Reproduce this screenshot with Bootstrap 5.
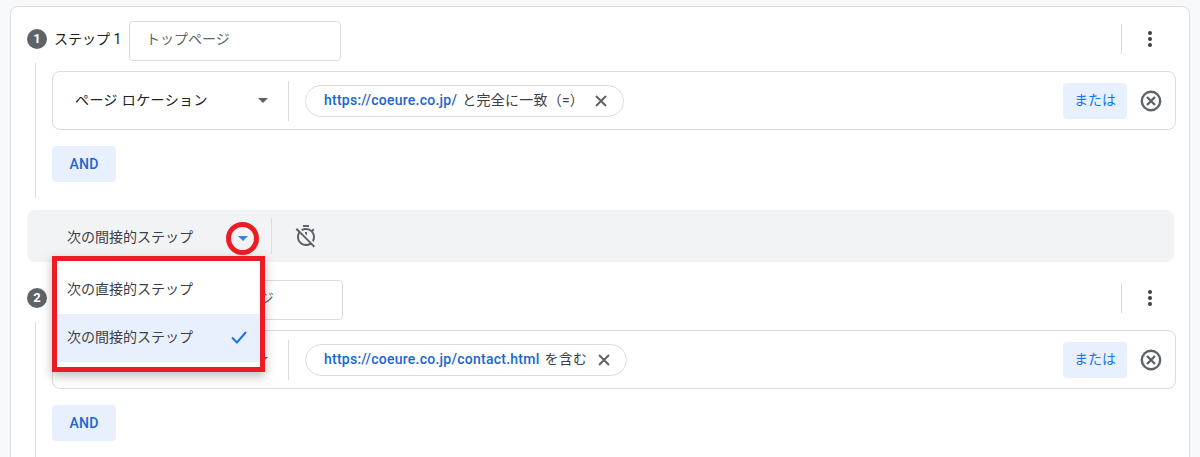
<!DOCTYPE html>
<html lang="ja">
<head>
<meta charset="UTF-8">
<meta name="viewport" content="width=device-width, initial-scale=1.0">
<link rel="stylesheet" href="https://cdn.jsdelivr.net/npm/bootstrap@5.3.0/dist/css/bootstrap.min.css">
<title>ステップ</title>
<style>
html, body { height: 457px; overflow: hidden; }
body { background: #f8f9fa; color: #3c4043; font-family: Roboto, "Noto Sans CJK JP", sans-serif; font-size: 14px; padding: 6px 10px 0; }
.step-card { background: #fff; border: 1px solid #dadce0; border-radius: 8px; padding: 14px 13px 0 16px; height: 600px; }
.step-head { height: 40px; }
.step-num { width: 20px; height: 20px; border-radius: 50%; background: #5f6368; color: #fff; font-size: 13px; font-weight: 700; margin: 0 7px 4px 0; }
.step-label { width: 75px; color: #202124; margin-bottom: 4px; }
.step-name { width: 212px; height: 40px; border: 1px solid #dadce0; border-radius: 4px; padding: 0 0 3px 16px; color: #5f6368; }
.step-name-second { width: 212px; margin-left: 2px; }
.head-rule { width: 1px; height: 30px; background: #dadce0; margin: 0 18px 4px 0; }
.kebab { margin: 0 16px 5px 0; }
.step-body { margin: 2px 0 0 8px; border-left: 1px solid #dadce0; padding: 8px 0 16px 16px; }
.rule-box { height: 59px; border: 1px solid #dadce0; border-radius: 8px; }
.field-select { width: 235px; padding: 0 20px 0 22px; color: #202124; letter-spacing: .4px; }
.box-rule { width: 1px; height: 40px; background: #dadce0; margin-right: 16px; }
.rule-chip { height: 32px; border: 1px solid #dadce0; border-radius: 16px; padding: 0 15px 0 18px; white-space: nowrap; letter-spacing: .25px; }
.rule-chip b { color: #1967d2; font-weight: 500; margin-right: 5px; }
.chip-x { margin-left: 10px; }
.or-btn { width: 64px; height: 36px; background: #e8f0fe; color: #1a73e8; border: 0; border-radius: 4px; padding: 0; font-size: 14px; }
.remove-x { margin: 0 12px 0 12px; }
.and-btn { width: 64px; height: 36px; background: #e8f0fe; color: #1967d2; border: 0; border-radius: 4px; padding: 0; font-size: 14px; font-weight: 500; letter-spacing: .25px; margin-top: 16px; display: block; }
.next-bar { height: 52px; margin: 12px 2px 18px 0; background: #f1f3f4; border-radius: 8px; }
.next-select { width: 244px; padding: 0 0 0 40px; }
.next-select > span:first-child { padding-top: 2px; }
.caret-ring { width: 33px; height: 33px; border: 5px solid #ed1c24; border-radius: 50%; margin: 4px 12px 0 0; }
.bar-rule { width: 1px; height: 36px; background: #dadce0; margin-right: 22px; }
.next-menu { position: absolute; left: 25px; top: 46px; width: 213px; height: 116px; background: #fff; border: 5px solid #ed1c24; box-shadow: 0 4px 10px rgba(60, 64, 67, .35); z-index: 5; }
.next-item { height: 48px; padding: 0 12px 2px 10px; }
.next-item-top { height: 53px; padding: 3px 0 0 10px; }
.next-item-on { background: #e8f0fe; }
</style>
</head>
<body>
<div class="step-card">
    <div class="step-head d-flex align-items-center">
        <span class="step-num d-flex align-items-center justify-content-center">1</span>
        <span class="step-label">ステップ 1</span>
        <div class="step-name d-flex align-items-center">トップページ</div>
        <span class="head-rule ms-auto"></span>
        <svg class="kebab" width="20" height="20" viewBox="0 0 20 20" fill="#3c4043"><circle cx="10" cy="4" r="2"/><circle cx="10" cy="10" r="2"/><circle cx="10" cy="16" r="2"/></svg>
    </div>
    <div class="step-body">
        <div class="rule-box d-flex align-items-center">
            <div class="field-select d-flex align-items-center justify-content-between">
                <span>ページ ロケーション</span>
                <svg width="10" height="5" viewBox="0 0 10 5" fill="#5f6368"><path d="M0 0h10L5 5z"/></svg>
            </div>
            <span class="box-rule"></span>
            <div class="rule-chip d-flex align-items-center"><b>https://coeure.co.jp/</b>と完全に一致（=）
                <svg class="chip-x" width="14" height="14" viewBox="0 0 14 14" stroke="#5f6368" stroke-width="2" fill="none"><path d="M2 2l10 10M12 2L2 12"/></svg>
            </div>
            <button type="button" class="or-btn ms-auto">または</button>
            <svg class="remove-x" width="24" height="24" viewBox="0 0 24 24" fill="none" stroke="#5f6368" stroke-width="2.4"><circle cx="12" cy="12" r="9.2"/><path d="M8 8l8 8M16 8l-8 8"/></svg>
        </div>
        <button type="button" class="and-btn">AND</button>
    </div>

    <div class="next-bar position-relative d-flex align-items-center">
        <div class="next-select d-flex align-items-center justify-content-between">
            <span>次の間接的ステップ</span>
            <span class="caret-ring d-flex align-items-center justify-content-center">
                <svg width="10" height="5" viewBox="0 0 10 5" fill="#3b82e8"><path d="M0 0h10L5 5z"/></svg>
            </span>
        </div>
        <span class="bar-rule"></span>
        <svg width="24" height="24" viewBox="0 0 24 24" fill="#5f6368"><path d="M19.04 4.55l-1.42 1.42C16.07 4.74 14.12 4 12 4c-1.83 0-3.53.55-4.95 1.48l1.46 1.46C9.53 6.35 10.73 6 12 6c3.87 0 7 3.13 7 7 0 1.27-.35 2.47-.94 3.49l1.45 1.45C20.45 16.53 21 14.83 21 13c0-2.12-.74-4.07-1.97-5.61l1.42-1.42-1.41-1.42zM15 1H9v2h6V1zm-4 8.44l2 2V8h-2v1.44zM3.02 4L1.61 5.41l2.75 2.75C3.51 9.52 3 11.2 3 13c0 4.97 4.03 9 9 9 1.8 0 3.48-.51 4.84-1.37l2.75 2.75 1.41-1.41L3.02 4zM12 20c-3.87 0-7-3.13-7-7 0-1.24.33-2.4.89-3.4l9.51 9.51c-1 .56-2.16.89-3.4.89z"/></svg>
        <div class="next-menu">
            <div class="next-item next-item-top d-flex align-items-center">次の直接的ステップ</div>
            <div class="next-item next-item-on d-flex align-items-center justify-content-between">
                <span>次の間接的ステップ</span>
                <svg width="18" height="14" viewBox="0 0 18 14" fill="none" stroke="#1a73e8" stroke-width="2"><path d="M2 7.5l5 5L16 2"/></svg>
            </div>
        </div>
    </div>

    <div class="step-head d-flex align-items-center">
        <span class="step-num d-flex align-items-center justify-content-center">2</span>
        <span class="step-label">ステップ 2</span>
        <div class="step-name step-name-second d-flex align-items-center">お問い合わせページ</div>
        <span class="head-rule ms-auto"></span>
        <svg class="kebab" width="20" height="20" viewBox="0 0 20 20" fill="#3c4043"><circle cx="10" cy="4" r="2"/><circle cx="10" cy="10" r="2"/><circle cx="10" cy="16" r="2"/></svg>
    </div>
    <div class="step-body">
        <div class="rule-box d-flex align-items-center">
            <div class="field-select d-flex align-items-center justify-content-between">
                <span>ページ ロケーション</span>
                <svg width="10" height="5" viewBox="0 0 10 5" fill="#5f6368"><path d="M0 0h10L5 5z"/></svg>
            </div>
            <span class="box-rule"></span>
            <div class="rule-chip d-flex align-items-center"><b>https://coeure.co.jp/contact.html</b>を含む
                <svg class="chip-x" width="14" height="14" viewBox="0 0 14 14" stroke="#5f6368" stroke-width="2" fill="none"><path d="M2 2l10 10M12 2L2 12"/></svg>
            </div>
            <button type="button" class="or-btn ms-auto">または</button>
            <svg class="remove-x" width="24" height="24" viewBox="0 0 24 24" fill="none" stroke="#5f6368" stroke-width="2.4"><circle cx="12" cy="12" r="9.2"/><path d="M8 8l8 8M16 8l-8 8"/></svg>
        </div>
        <button type="button" class="and-btn">AND</button>
    </div>
</div>
<script src="https://cdn.jsdelivr.net/npm/bootstrap@5.3.0/dist/js/bootstrap.bundle.min.js"></script>
</body>
</html>
